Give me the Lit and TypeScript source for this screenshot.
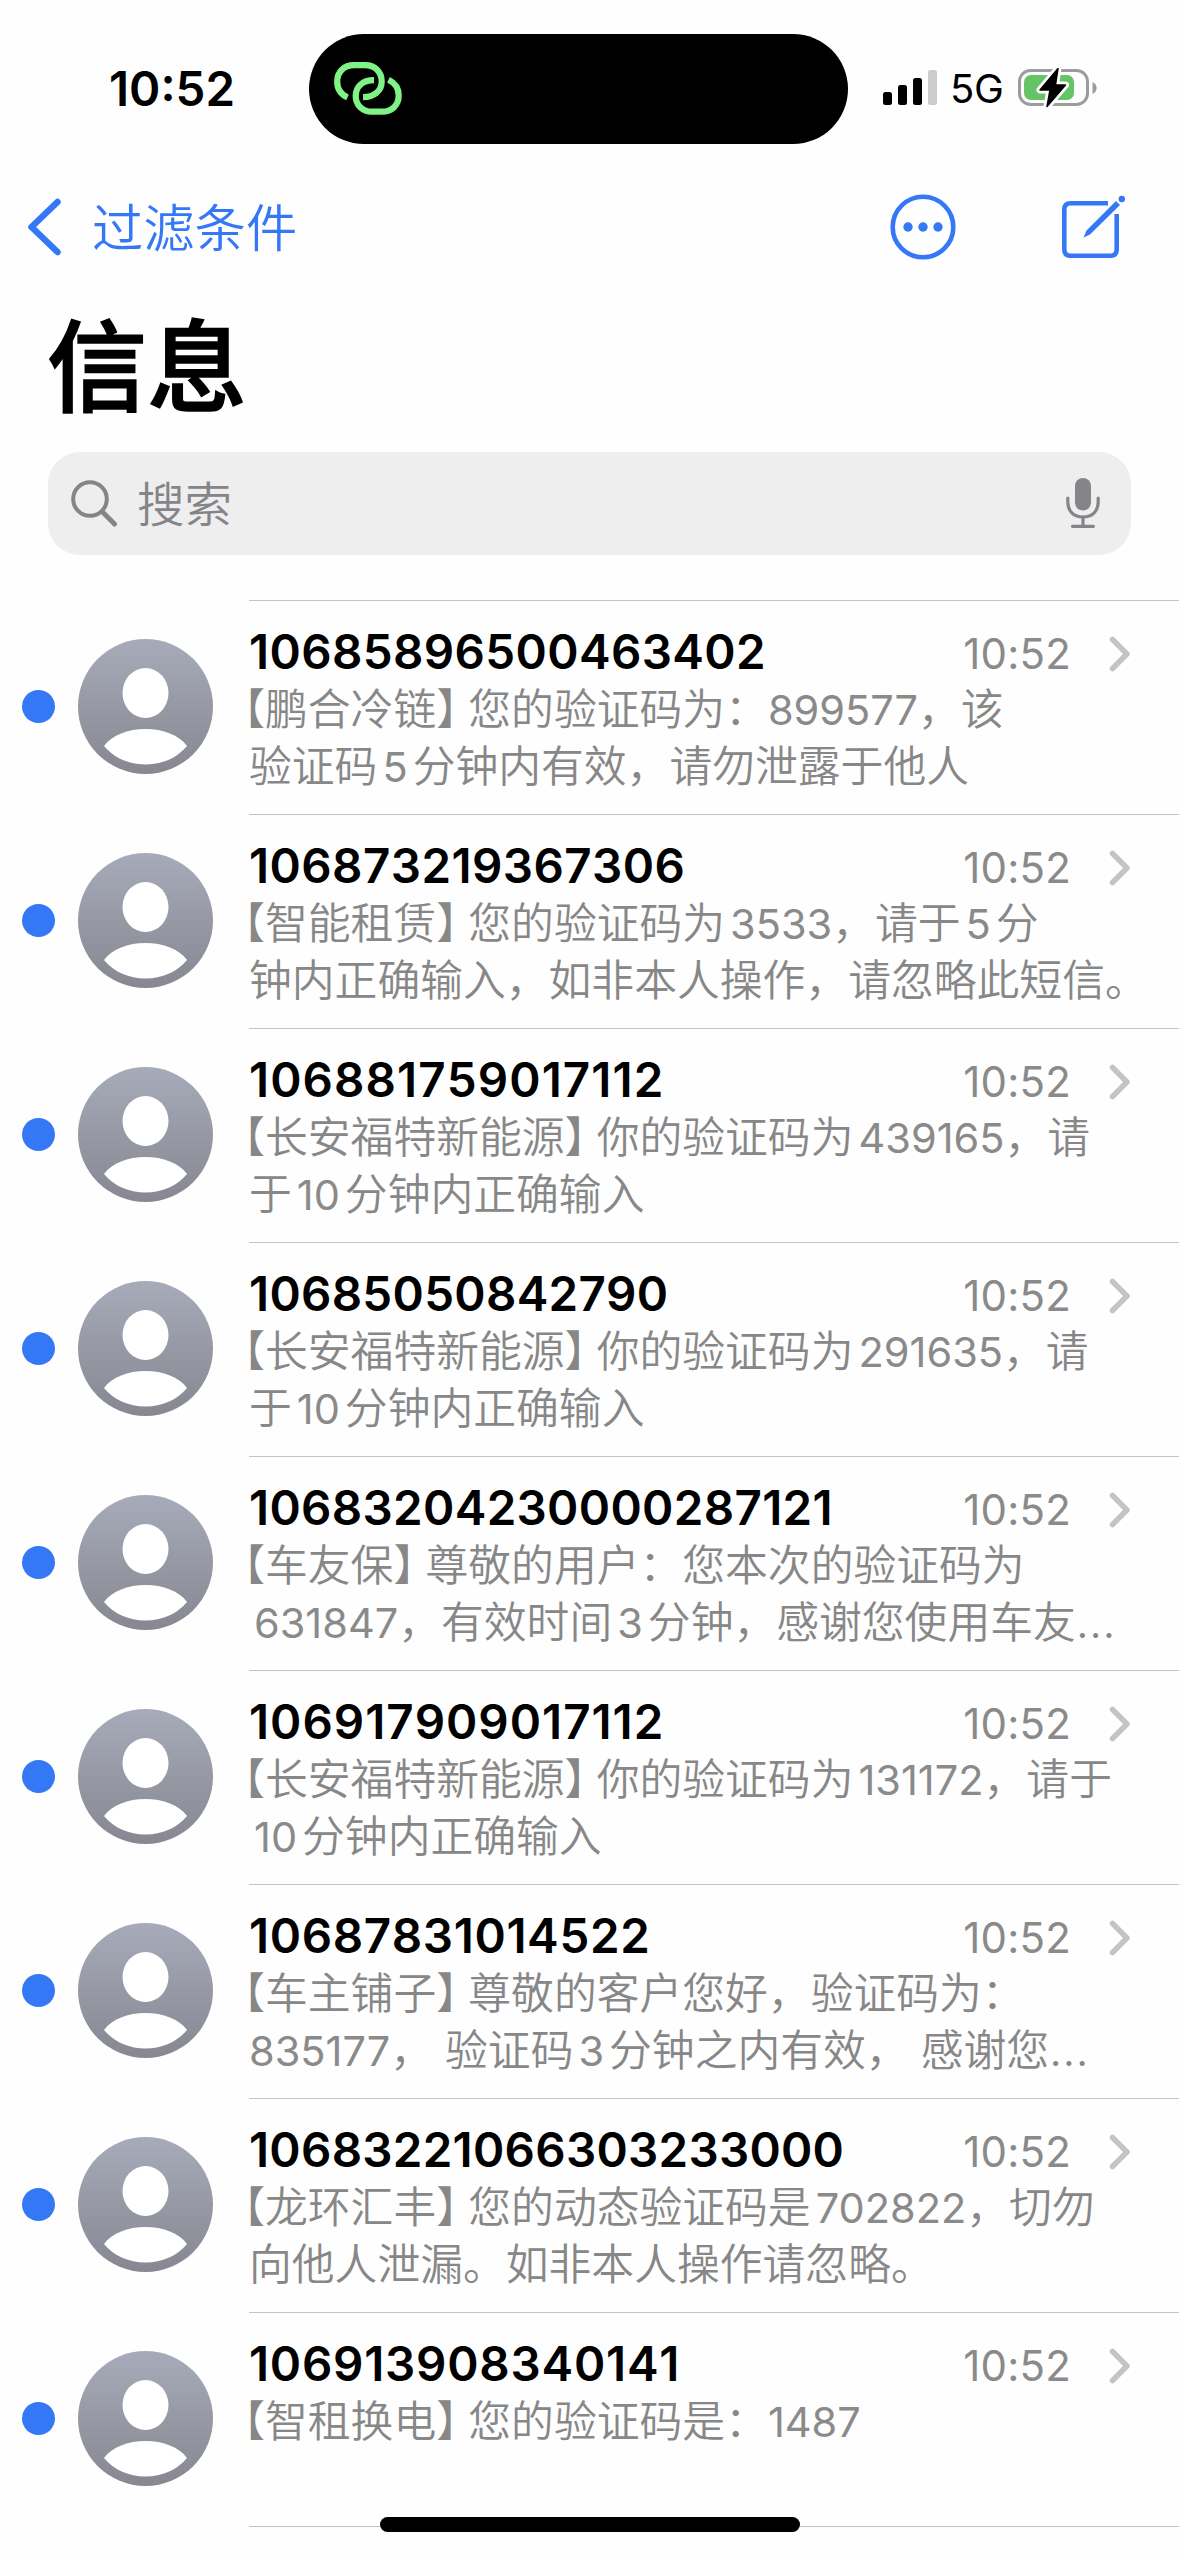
import { LitElement, html, css, svg } from "lit";
import { customElement, property } from "lit/decorators.js";
import { styleMap } from "lit/directives/style-map.js";

interface Message {
  sender: string;
  /** Extra spacing between the sender's digits, in pixels. */
  tracking: number;
  time: string;
  lines: string[];
}

const MESSAGES: Message[] = [
  { sender: "10685896500463402", tracking: 0.38, time: "10:52", lines: ["【鹏合冷链】您的验证码为：899577，该", "验证码5分钟内有效，请勿泄露于他人"] },
  { sender: "106873219367306", tracking: 0.44, time: "10:52", lines: ["【智能租赁】您的验证码为3533，请于5分", "钟内正确输入，如非本人操作，请忽略此短信。"] },
  { sender: "106881759017112", tracking: 1.1, time: "10:52", lines: ["【长安福特新能源】你的验证码为439165，请", "于10分钟内正确输入"] },
  { sender: "10685050842790", tracking: 0.29, time: "10:52", lines: ["【长安福特新能源】你的验证码为291635，请", "于10分钟内正确输入"] },
  { sender: "10683204230000287121", tracking: 0.33, time: "10:52", lines: ["【车友保】尊敬的用户：您本次的验证码为", "631847，有效时间3分钟，感谢您使用车友…"] },
  { sender: "106917909017112", tracking: 1.0, time: "10:52", lines: ["【长安福特新能源】你的验证码为131172，请于", "10分钟内正确输入"] },
  { sender: "10687831014522", tracking: 0.64, time: "10:52", lines: ["【车主铺子】尊敬的客户您好，验证码为：", "835177， 验证码3分钟之内有效， 感谢您…"] },
  { sender: "10683221066303233000", tracking: 0.28, time: "10:52", lines: ["【龙环汇丰】您的动态验证码是702822，切勿", "向他人泄漏。如非本人操作请忽略。"] },
  { sender: "106913908340141", tracking: 0.77, time: "10:52", lines: ["【智租换电】您的验证码是：1487"] },
];

const HAN = /[\u4e00-\u9fff]/;

@customElement("message-row")
export class MessageRow extends LitElement {
  @property({ attribute: false }) message!: Message;

  static styles = css`
    :host {
      display: grid;
      grid-template-columns: 77px 172px 1fr;
      height: 214px;
    }
    .unread {
      align-self: center;
      margin: 0 0 1px 22px;
      width: 33px;
      height: 33px;
      border-radius: 50%;
      background: #3478f6;
    }
    .avatar {
      align-self: center;
      margin: 0 0 1px 1px;
      width: 135px;
      height: 135px;
    }
    .body {
      border-top: 1px solid #c4c4c6;
      box-sizing: border-box;
      padding-top: 21px;
      height: 214px;
      min-width: 0;
    }
    .head {
      display: flex;
      align-items: center;
      height: 59px;
      padding-right: 48px;
    }
    .sender {
      flex: 1;
      font-weight: 600;
      font-size: 47.5px;
      line-height: 59px;
      font-kerning: none;
      color: #000;
    }
    .time {
      font-size: 42px;
      line-height: 59px;
      padding-top: 3px;
      color: #8a8a8a;
      margin-right: 37px;
      letter-spacing: 0.2px;
    }
    .chevron {
      width: 23px;
      height: 36px;
      margin-top: 4px;
    }
    .line {
      font-size: 42.8px;
      font-weight: 350;
      line-height: 57.3px;
      height: 57.3px;
      color: #878787;
      white-space: pre;
      text-spacing-trim: space-all;
      text-autospace: no-autospace;
    }
    .num {
      font-size: 41.5px;
      font-weight: 400;
      color: #8a8a8a;
    }
    .before {
      margin-left: 5px;
    }
    .after {
      margin-right: 5px;
    }
    .open {
      font-feature-settings: "halt";
      margin-left: -5.4px;
    }
    .close {
      font-feature-settings: "halt";
      margin-right: 10.7px;
    }
    .dots {
      font-size: 47px;
      line-height: 0;
    }
  `;

  private renderLine(text: string, index: number) {
    const previous = index > 0 ? this.message.lines[index - 1].slice(-1) : "";
    const parts = text.match(/\d+|[【】…]|[^\d【】…]+/g) ?? [];
    return html`<div class="line">${parts.map((part, i) => {
      if (part === "【") return html`<span class="open">${part}</span>`;
      if (part === "】") return html`<span class="close">${part}</span>`;
      if (part === "…") return html`<span class="dots">${part}</span>`;
      if (!/\d/.test(part)) return part;
      const left = i > 0 ? parts[i - 1].slice(-1) : previous;
      const right = (parts[i + 1] ?? "").charAt(0);
      const cls = `num${HAN.test(left) ? " before" : ""}${HAN.test(right) ? " after" : ""}`;
      return html`<span class=${cls}>${part}</span>`;
    })}</div>`;
  }

  render() {
    const m = this.message;
    return html`
      <span class="unread"></span>
      <svg class="avatar" viewBox="0 0 135 135">
        <defs>
          <linearGradient id="g" x1="0" y1="0" x2="0" y2="1">
            <stop offset="0" stop-color="#a7abb9" />
            <stop offset="1" stop-color="#868791" />
          </linearGradient>
        </defs>
        <circle cx="67.5" cy="67.5" r="67.5" fill="url(#g)" />
        <ellipse cx="67.5" cy="54" rx="23" ry="25" fill="#fff" />
        <path d="M26 107 C34 96 50 90 67.500 90 C85 90 101 96 109 107 C99 119 84 125.500 67.500 125.500 C51 125.500 36 119 26 107Z" fill="#fff" />
      </svg>
      <div class="body">
        <div class="head">
          <span class="sender" style=${styleMap({ letterSpacing: `${m.tracking}px` })}>${m.sender}</span>
          <span class="time">${m.time}</span>
          <svg class="chevron" viewBox="0 0 23 36">
            <path d="M4.500 3.500 L19 18 L4.500 32.500" fill="none" stroke="#c4c4c6" stroke-width="5.500" stroke-linecap="round" stroke-linejoin="round" />
          </svg>
        </div>
        ${m.lines.map((line, i) => this.renderLine(line, i))}
      </div>
    `;
  }
}

const signalBars = [
  { x: 0, y: 22, on: true },
  { x: 15, y: 15, on: true },
  { x: 30, y: 8, on: true },
  { x: 45, y: 0, on: false },
];

const BOLT = "M40.500 0 L22.500 21.500 L32.500 21.500 L29.500 38 L48 16.500 L38 16.500 Z";

@customElement("app-root")
export class AppRoot extends LitElement {
  static styles = css`
    :host {
      display: block;
      position: relative;
      width: 1179px;
      height: 2556px;
      overflow: hidden;
      background: #fefefe;
      font-family: "Inter", "Noto Sans CJK SC", sans-serif;
    }
    .status {
      display: grid;
      grid-template-columns: 309px 539px 1fr;
      height: 144px;
      padding-top: 34px;
      box-sizing: border-box;
    }
    .clock {
      padding-left: 109px;
      font-size: 47.5px;
      font-weight: 600;
      line-height: 109px;
    }
    .island {
      height: 110px;
      border-radius: 55px;
      background: #000;
      display: flex;
      align-items: center;
      padding-left: 24px;
      box-sizing: border-box;
    }
    .link {
      width: 70px;
      height: 56px;
    }
    .indicators {
      display: flex;
      align-items: center;
      height: 107px;
      padding-left: 35px;
    }
    .signal {
      width: 54px;
      height: 35px;
    }
    .network {
      font-size: 40px;
      font-weight: 400;
      line-height: 60px;
      width: 52px;
      margin: 3px 0 0 13px;
      letter-spacing: -0.4px;
    }
    .battery {
      width: 80px;
      height: 40px;
      margin-left: 16px;
    }
    .nav {
      display: flex;
      align-items: center;
      height: 167px;
      color: #3478f6;
    }
    .back {
      width: 38px;
      height: 60px;
      margin: 0 0 1px 26px;
    }
    .backlabel {
      flex: 1;
      font-size: 51.3px;
      font-weight: 350;
      line-height: 80px;
      padding-left: 28px;
    }
    .more {
      width: 66px;
      height: 66px;
      margin-bottom: 1px;
    }
    .compose {
      width: 70px;
      height: 70px;
      margin: 0 51px 2px 102px;
    }
    .title {
      margin: 0;
      padding-left: 47px;
      height: 141px;
      font-size: 100px;
      font-weight: 500;
      -webkit-text-stroke: 1.5px #000;
      line-height: 113px;
      box-sizing: border-box;
    }
    .search {
      display: flex;
      align-items: center;
      height: 103px;
      margin: 0 48px;
      padding: 0 29px 0 22px;
      border-radius: 32px;
      background: #eeeeef;
      color: #858589;
    }
    .glass {
      width: 50px;
      height: 50px;
      margin-bottom: 2px;
    }
    .placeholder {
      flex: 1;
      padding: 2px 0 0 17px;
      font-size: 47.5px;
      font-weight: 350;
      line-height: 80px;
    }
    .mic {
      width: 38px;
      height: 52px;
      margin-bottom: 1px;
    }
    .list {
      padding-top: 45px;
    }
    .end {
      margin-left: 249px;
      height: 1px;
      background: #c4c4c6;
    }
    .home {
      position: absolute;
      left: 380px;
      top: 2517px;
      width: 420px;
      height: 15px;
      border-radius: 8px;
      background: #000;
    }
  `;

  render() {
    return html`
      <div class="status">
        <div class="clock">10:52</div>
        <div class="island">
          <svg class="link" viewBox="0 0 70 56" fill="none" stroke="#7ff486" stroke-width="6.200">
            <path d="M14.500 36.500 C8 33.500 4.200 27.500 4.200 20.500 C4.200 11 11 4.200 21 4.200 L32 4.200 C42 4.200 48.700 11 48.700 20.500 C48.700 30 41 36.200 30 36.200" />
            <path d="M41 19.200 C29 19.200 22.700 26 22.700 35 C22.700 44 29.500 50.700 39 50.700 L49 50.700 C59 50.700 65.700 44 65.700 34.500 C65.700 28 62 22 55.500 18.800" />
          </svg>
        </div>
        <div class="indicators">
          <svg class="signal" viewBox="0 0 54 35">
            ${signalBars.map(
              (b) => svg`<rect x=${b.x} y=${b.y} width="9" height=${35 - b.y} rx="2.5" fill=${b.on ? "#000" : "#cccccc"} />`
            )}
          </svg>
          <span class="network">5G</span>
          <svg class="battery" viewBox="0 0 80 40">
            <rect x="1.500" y="2.500" width="68" height="34" rx="11" fill="none" stroke="#9c9c9e" stroke-width="3" />
            <rect x="6" y="7" width="50" height="25" rx="7" fill="#65c466" />
            <path d="M74.500 14 C80 16.500 80 23.500 74.500 26 Z" fill="#9c9c9e" />
            <path d=${BOLT} transform="translate(-.5 .5)" fill="#fff" stroke="#fff" stroke-width="7" stroke-linejoin="round" />
            <path d=${BOLT} transform="translate(-.5 .5)" fill="#000" stroke="#000" stroke-width="1.500" stroke-linejoin="round" />
          </svg>
        </div>
      </div>

      <div class="nav">
        <svg class="back" viewBox="0 0 38 60">
          <path d="M31.500 5 L5.500 30 L31.500 55" fill="none" stroke="#3478f6" stroke-width="6.500" stroke-linecap="round" stroke-linejoin="round" />
        </svg>
        <span class="backlabel">过滤条件</span>
        <svg class="more" viewBox="0 0 66 66">
          <circle cx="33" cy="33" r="30.300" fill="none" stroke="#3478f6" stroke-width="4.600" />
          <circle cx="18" cy="33" r="4.700" fill="#3478f6" />
          <circle cx="33" cy="33" r="4.700" fill="#3478f6" />
          <circle cx="48" cy="33" r="4.700" fill="#3478f6" />
        </svg>
        <svg class="compose" viewBox="0 0 70 70" fill="none" stroke="#3478f6" stroke-width="4.600">
          <path d="M50 11.300 L12.500 11.300 Q6.300 11.300 6.300 17.500 L6.300 57.500 Q6.300 63.700 12.500 63.700 L52.500 63.700 Q58.700 63.700 58.700 57.500 L58.700 22" />
          <path d="M58 9 L62 13 L32 42.500 L25.500 45.500 L28.500 38.500 Z" fill="#3478f6" stroke="none" />
          <circle cx="63.800" cy="7" r="3.200" fill="#3478f6" stroke="none" />
        </svg>
      </div>

      <h1 class="title">信息</h1>

      <div class="search">
        <svg class="glass" viewBox="0 0 50 50" fill="none" stroke="#858589">
          <circle cx="20" cy="21" r="16.800" stroke-width="4" />
          <path d="M32.500 34 L44.500 46" stroke-width="5" stroke-linecap="round" />
        </svg>
        <span class="placeholder">搜索</span>
        <svg class="mic" viewBox="0 0 38 52" fill="none" stroke="#858589" stroke-width="3.200" stroke-linecap="round">
          <rect x="11" y="1" width="16" height="32.500" rx="8" fill="#858589" stroke="none" />
          <path d="M3.800 21 L3.800 25 C3.800 34.500 10 40 19 40 C28 40 34.200 34.500 34.200 25 L34.200 21" />
          <path d="M19 40 L19 49 M8.500 49.300 L29.500 49.300" />
        </svg>
      </div>

      <div class="list">
        ${MESSAGES.map((m) => html`<message-row .message=${m}></message-row>`)}
        <div class="end"></div>
      </div>
      <div class="home"></div>
    `;
  }
}
